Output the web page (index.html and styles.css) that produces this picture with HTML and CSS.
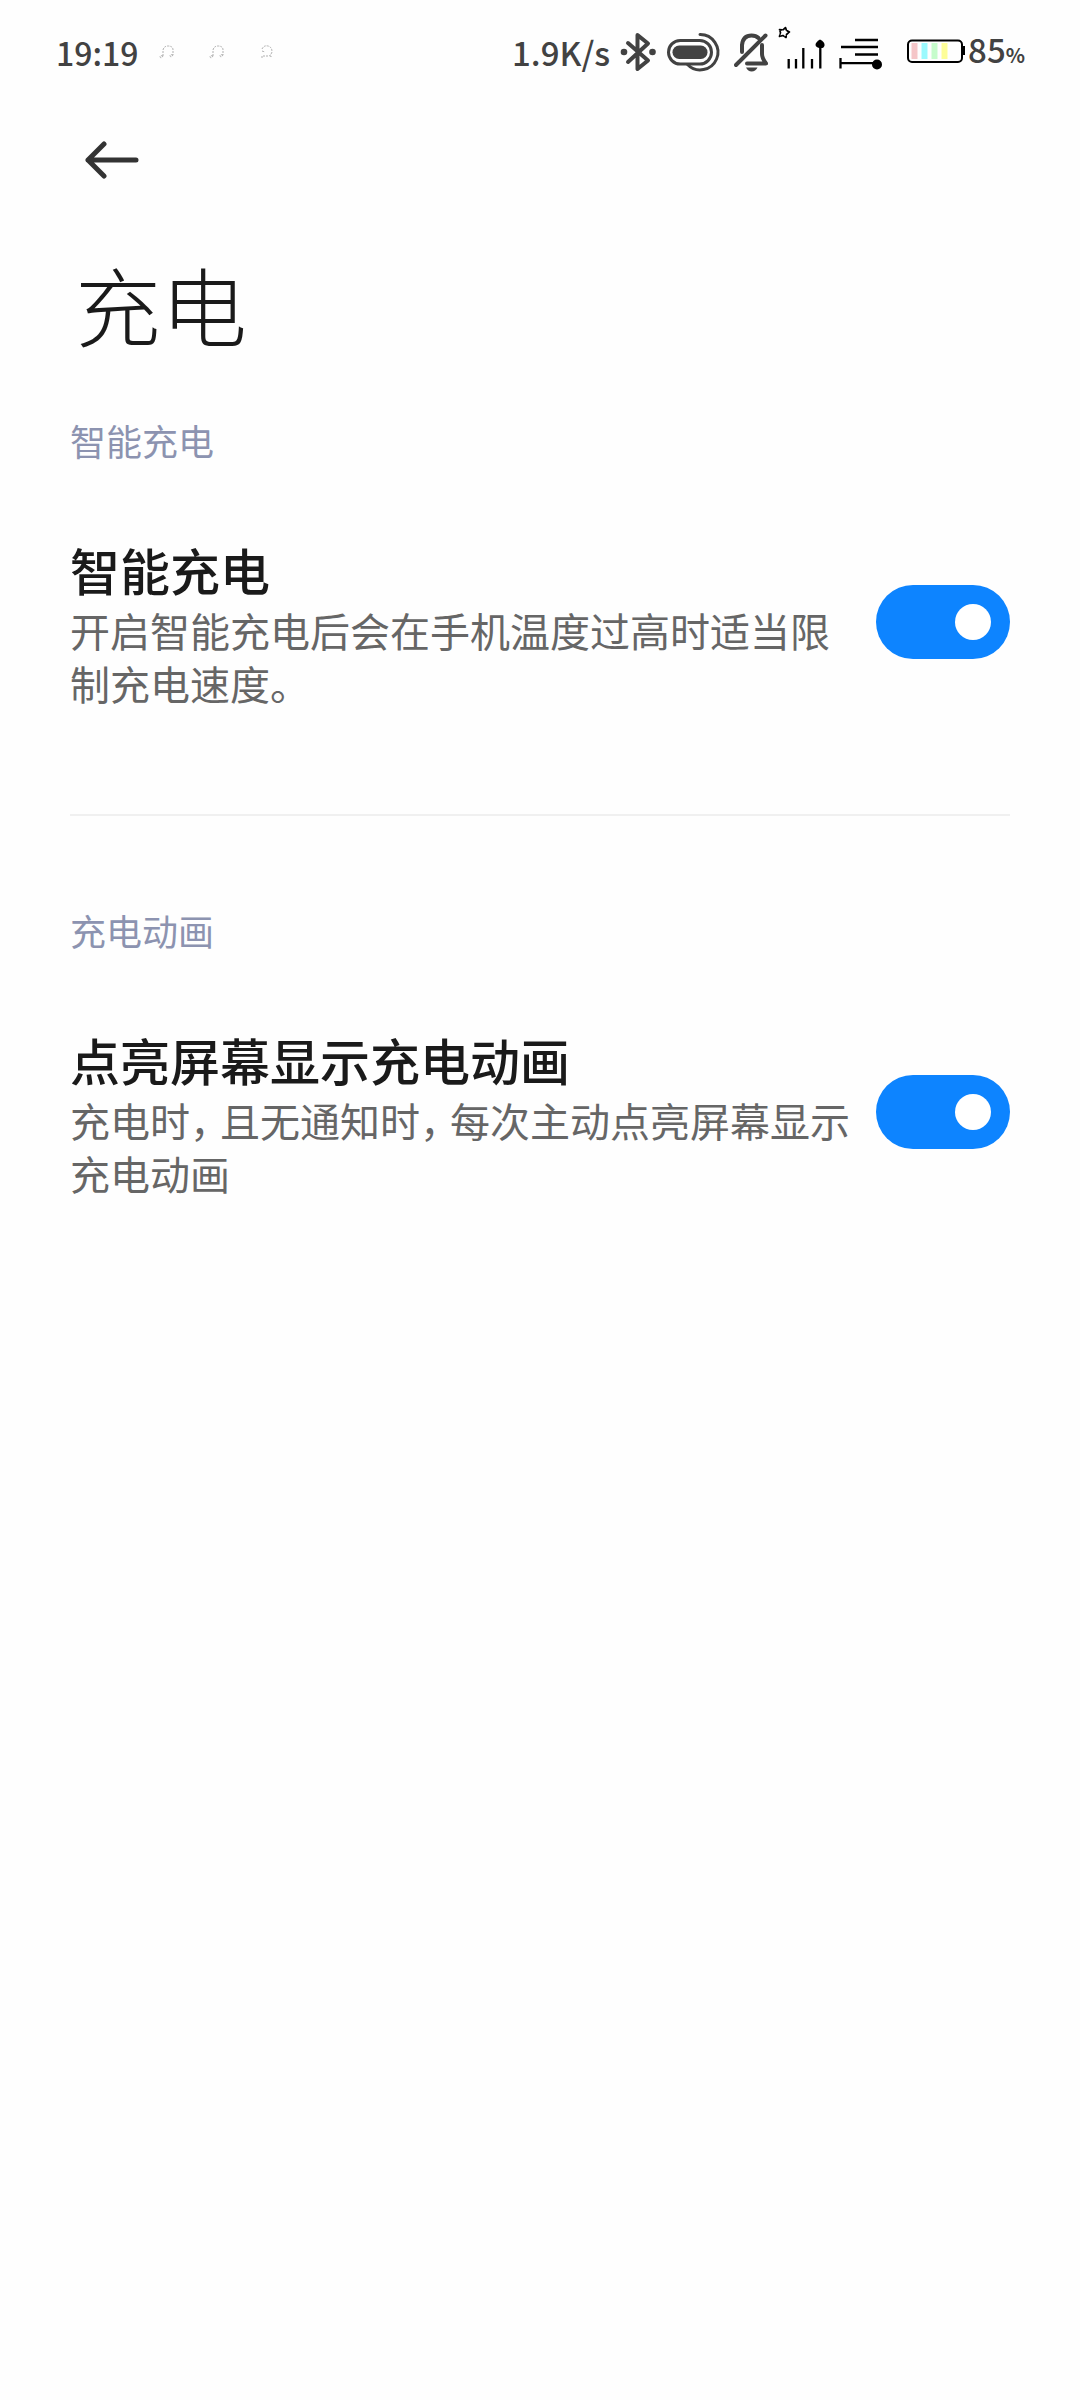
FILE: index.html
```html
<!DOCTYPE html>
<html lang="zh-CN">
<head>
  <meta charset="UTF-8">
  <meta name="viewport" content="width=device-width, initial-scale=1">
  <title>充电</title>
  <link rel="stylesheet" href="styles.css">
</head>
<body>

  <div class="status-bar">
    <div class="status-left">
      <span class="clock">19:19</span>
      <svg class="note" width="16" height="16" viewBox="0 0 16 16">
        <path d="M4 12V6q1-4 5-4q5 0 5 4v5M4 12q-3-1-3 1q1 2 3-1M14 11q-3-1-3 1q1 2 3-1"/>
      </svg>
      <svg class="note" width="16" height="16" viewBox="0 0 16 16">
        <path d="M4 12V6q1-4 5-4q5 0 5 4v5M4 12q-3-1-3 1q1 2 3-1M14 11q-3-1-3 1q1 2 3-1"/>
      </svg>
      <svg class="note" width="16" height="16" viewBox="0 0 16 16">
        <path d="M3 5q2-4 6-3q4 1 4 6q-1 3-3 4h2v2M3 7l3 1M3 14v-2h6"/>
      </svg>
    </div>

    <div class="status-right">
      <span class="speed">1.9K/s</span>
      <!-- bluetooth -->
      <svg class="icon" width="37" height="52" viewBox="0 0 37 52">
        <path d="M8 17L28 34.500L17.500 43V9L28 17.500L8 36" stroke-width="4"/>
        <circle class="fill" cx="4" cy="26" r="3.300"/>
        <circle class="fill" cx="32.500" cy="26" r="3.300"/>
      </svg>
      <!-- pill -->
      <svg class="icon" width="57" height="52" viewBox="0 0 57 52">
        <rect x="1.500" y="14.500" width="43" height="23.500" rx="11.700" stroke-width="3"/>
        <rect class="fill" x="5.500" y="19.500" width="35" height="13.500" rx="6.700"/>
        <path d="M33 8.500A17.700 17.700 0 1 1 20.500 38.500" stroke-width="3"/>
      </svg>
      <!-- muted bell -->
      <svg class="icon" width="34" height="52" viewBox="0 0 34 52">
        <path d="M2 39L31.500 9.500" stroke-width="4"/>
        <path d="M8 26V19Q9 9.500 17.500 9.500Q22 9.500 24.500 12M28 19V28Q28 32 32 37.500H13" stroke-width="4"/>
        <path class="fill" d="M12 41.500H23.500Q21.500 45.500 17.700 45.500T12 41.500Z"/>
      </svg>
      <!-- signal -->
      <svg class="icon black" width="51" height="52" viewBox="0 0 51 52">
        <path d="M7.500 1.500L8.500 4.500L11.500 6L8.500 8.500L8 11.500L5 9.500L1.500 10.500L2.500 6.500L1.500 3.500L5 4Z" stroke-width="1.700" stroke-dasharray="2.500 1.500"/>
        <path class="flat" d="M10.700 33V42.500M18 33V42.500M25.300 22V42.500M34 33V42.500M42.300 18V42.500" stroke-width="2.300"/>
        <path class="fill" d="M42 13.500Q47 16 46.500 19.500Q46 22.500 42 22T37.500 19Q37.500 16 42 13.500Z"/>
      </svg>
      <!-- second sim -->
      <svg class="icon black" width="58" height="52" viewBox="0 0 58 52">
        <path class="flat" d="M16 14H39M2 21H39M16 28.500H39M1.500 37.200H38M1.500 32V42.500" stroke-width="2.300"/>
        <circle class="fill" cx="38" cy="38.500" r="5"/>
      </svg>
      <div class="battery">
        <svg class="icon black" width="58" height="52" viewBox="0 0 58 52">
          <rect x="1" y="14.500" width="54" height="21.500" rx="4" stroke-width="2"/>
          <rect class="fill" x="55" y="20" width="3" height="9"/>
          <rect class="cell pink" x="4.500" y="17" width="6" height="16"/>
          <rect class="cell cyan" x="14.500" y="17" width="6" height="16"/>
          <rect class="cell green" x="24.500" y="17" width="6" height="16"/>
          <rect class="cell yellow" x="34.500" y="17" width="6" height="16"/>
        </svg>
        <span class="level">85<span class="percent">%</span></span>
      </div>
    </div>
  </div>

  <header class="header">
    <button class="back" type="button" aria-label="返回">
      <svg width="54" height="38" viewBox="0 0 54 38">
        <path d="M19 3L3 19L19 35M3 19H51"/>
      </svg>
    </button>
    <h1 class="page-title">充电</h1>
  </header>

  <main>
    <section class="group">
      <h2 class="group-title">智能充电</h2>
      <div class="item">
        <label class="item-text" for="smartCharge">
          <span class="item-title">智能充电</span>
          <span class="item-desc">开启智能充电后会在手机温度过高时适当限制充电速度。</span>
        </label>
        <input class="switch" type="checkbox" role="switch" id="smartCharge" checked>
      </div>
    </section>

    <section class="group">
      <h2 class="group-title">充电动画</h2>
      <div class="item">
        <label class="item-text" for="chargeAnim">
          <span class="item-title">点亮屏幕显示充电动画</span>
          <span class="item-desc">充电时<span class="comma">，</span>且无通知时<span class="comma">，</span>每次主动点亮屏幕显示充电动画</span>
        </label>
        <input class="switch" type="checkbox" role="switch" id="chargeAnim" checked>
      </div>
    </section>
  </main>

</body>
</html>
```
FILE: styles.css
```css
* {
  box-sizing: border-box;
}

body {
  margin: 0;
  background: #fefefe;
  color: #1a1a1a;
  font-family: "Noto Sans CJK SC", sans-serif;
}

h1, h2 {
  margin: 0;
}

/* status bar */
.status-bar {
  display: flex;
  justify-content: space-between;
  align-items: center;
  height: 104px;
  padding: 0 55px 0 56px;
  color: #424242;
  font-size: 33px;
  font-weight: 500;
  line-height: 48px;
}

.status-left {
  display: flex;
  align-items: center;
  gap: 34px;
}

.clock {
  margin-right: -14px;
  font-size: 32px;
}

.note {
  fill: none;
  stroke: #b0b0b0;
  stroke-width: 1;
  stroke-dasharray: 2 1;
}

.status-right {
  display: flex;
  align-items: center;
  gap: 10px;
}

.icon {
  display: block;
  flex: none;
  fill: none;
  stroke: #424242;
  stroke-linecap: round;
  stroke-linejoin: round;
}

.icon .fill {
  fill: #424242;
  stroke: none;
}

.icon.black {
  stroke: #000;
}

.icon.black .fill {
  fill: #000;
}

.icon .flat {
  stroke-linecap: butt;
}

.battery {
  display: flex;
  align-items: center;
  gap: 3px;
}

.cell {
  stroke: none;
}

.pink {
  fill: #f5c6c8;
}

.cyan {
  fill: #9bf9fd;
}

.green {
  fill: #c6fccb;
}

.yellow {
  fill: #fdfd98;
}

.percent {
  font-size: 20px;
  font-weight: 700;
}

/* header */
.header {
  padding: 24px 70px 0;
}

.back {
  display: block;
  padding: 13px 15px;
  border: none;
  background: none;
  cursor: pointer;
}

.back svg {
  display: block;
  fill: none;
  stroke: #333;
  stroke-width: 5;
  stroke-linecap: round;
  stroke-linejoin: round;
}

.page-title {
  margin-top: 52px;
  padding-left: 5px;
  font-size: 86px;
  font-weight: 300;
  line-height: 120px;
}

/* settings */
.group {
  margin: 0 70px;
  padding-bottom: 104px;
}

.group + .group {
  border-top: 2px solid #f0f0f0;
  padding-top: 90px;
}

.group:first-child {
  padding-top: 52px;
}

.group-title {
  margin-bottom: 70px;
  color: #8c93b0;
  font-size: 36px;
  font-weight: 400;
  line-height: 48px;
}

.item {
  display: flex;
  justify-content: space-between;
  align-items: center;
  gap: 22px;
}

.item-text {
  flex: 1;
}

.item-title {
  display: block;
  font-size: 50px;
  font-weight: 500;
  line-height: 70px;
}

.item-desc {
  display: block;
  color: #666;
  font-size: 40px;
  line-height: 53px;
}

/* narrow comma */
.comma {
  padding-right: 10px;
  font-feature-settings: "halt";
}

.switch {
  appearance: none;
  display: flex;
  flex: none;
  align-items: center;
  width: 134px;
  height: 74px;
  margin: 0;
  padding: 0 19px;
  border-radius: 37px;
  background: #ccc;
  cursor: pointer;
}

.switch::before {
  content: "";
  width: 36px;
  height: 36px;
  border-radius: 50%;
  background: #fff;
}

.switch:checked {
  justify-content: flex-end;
  background: #0d84ff;
}
```
